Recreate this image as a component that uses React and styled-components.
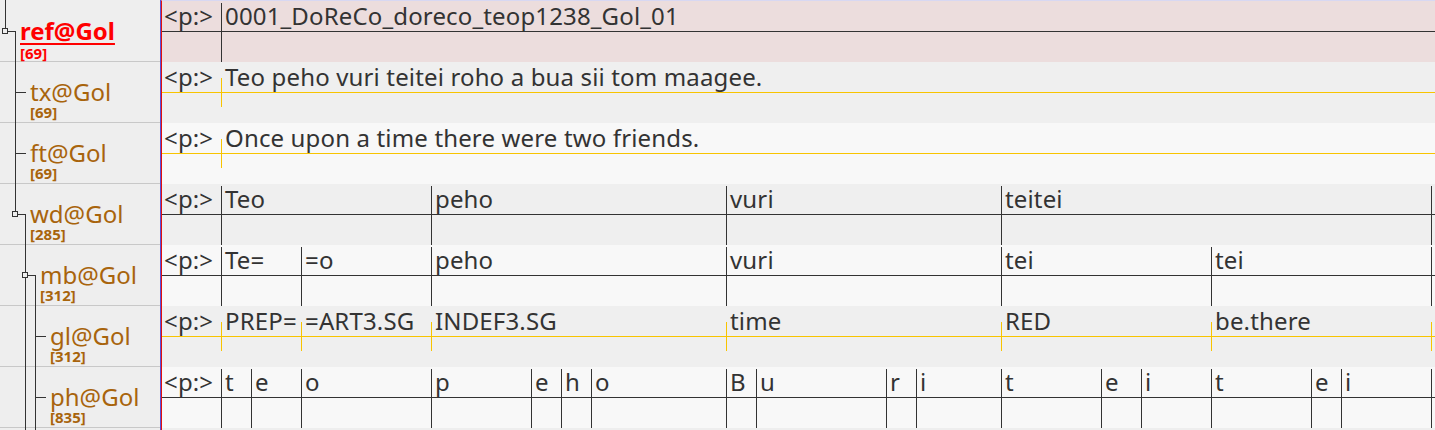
import React from 'react';
import styled, { createGlobalStyle } from 'styled-components';

const GlobalStyle = createGlobalStyle`
  html, body {
    margin: 0;
    padding: 0;
    background: #eeeeee;
    overflow: hidden;
  }
  body {
    font-family: 'Noto Sans', 'Open Sans', sans-serif;
  }
`;

const DARK = '#333333';
const GOLD = '#f8c400';

const tiers = [
  {
    name: 'ref@Gol',
    count: 69,
    depth: 0,
    active: true,
    bg: '#ecdddd',
    line: DARK,
    full: true,
    open: ['0001_DoReCo_doreco_teop1238_Gol_01'],
  },
  {
    name: 'tx@Gol',
    count: 69,
    depth: 1,
    bg: '#efefef',
    line: GOLD,
    open: ['Teo peho vuri teitei roho a bua sii tom maagee.'],
  },
  {
    name: 'ft@Gol',
    count: 69,
    depth: 1,
    bg: '#f8f8f8',
    line: GOLD,
    open: ['Once upon a time there were two friends.'],
  },
  {
    name: 'wd@Gol',
    count: 285,
    depth: 1,
    bg: '#efefef',
    line: DARK,
    full: true,
    bounds: [221, 431, 726, 1001, 1431],
    labels: ['Teo', 'peho', 'vuri', 'teitei'],
  },
  {
    name: 'mb@Gol',
    count: 312,
    depth: 2,
    bg: '#f8f8f8',
    line: DARK,
    full: true,
    bounds: [221, 301, 431, 726, 1001, 1211, 1431],
    labels: ['Te=', '=o', 'peho', 'vuri', 'tei', 'tei'],
  },
  {
    name: 'gl@Gol',
    count: 312,
    depth: 3,
    bg: '#efefef',
    line: GOLD,
    bounds: [221, 301, 431, 726, 1001, 1211, 1431],
    labels: ['PREP=', '=ART3.SG', 'INDEF3.SG', 'time', 'RED', 'be.there'],
  },
  {
    name: 'ph@Gol',
    count: 835,
    depth: 3,
    bg: '#f8f8f8',
    line: DARK,
    full: true,
    bounds: [
      221, 251, 301, 431, 531, 561, 591, 726, 756, 886, 916, 1001, 1101, 1141,
      1211, 1311, 1341, 1431,
    ],
    labels: ['t', 'e', 'o', 'p', 'e', 'h', 'o', 'B', 'u', 'r', 'i', 't', 'e', 'i', 't', 'e', 'i'],
  },
];

const Layout = styled.div`
  display: grid;
  grid-template-columns: 161px 1fr;
  height: 430px;
  overflow: hidden;
`;

const TierPanel = styled.aside`
  position: relative;
  padding-top: 1px;
  background: #eeeeee;
  border-right: 1px solid #5a50d8;
`;

const TierRow = styled.div`
  box-sizing: border-box;
  height: 61px;
  border-bottom: 1px solid #c8c8c8;
  padding: 18px 0 0 ${(p) => 20 + p.$depth * 10}px;
`;

const TierName = styled.div`
  font-size: 24px;
  line-height: 24px;
  white-space: nowrap;
  color: ${(p) => (p.$active ? '#ff0000' : '#a8640c')};
  font-weight: ${(p) => (p.$active ? 700 : 400)};
  text-decoration: ${(p) => (p.$active ? 'underline' : 'none')};
  text-decoration-thickness: 2px;
  text-underline-offset: 3px;
`;

const TierCount = styled.div`
  font-size: 15px;
  line-height: 15px;
  font-weight: 700;
  margin-top: ${(p) => (p.$active ? 3 : 1)}px;
  color: ${(p) => (p.$active ? '#ff0000' : '#a8640c')};
`;

const Tree = styled.svg`
  position: absolute;
  left: 0;
  top: 0;
  pointer-events: none;
`;

const Timeline = styled.main`
  border-left: 1px solid #e01010;
  border-top: 1px solid #d8d8f2;
  overflow: hidden;
  min-width: 0;
`;

const AnnotationRow = styled.div`
  display: flex;
  height: 61px;
  background: linear-gradient(
      to bottom,
      transparent 30px,
      ${(p) => p.$line} 30px,
      ${(p) => p.$line} 31px,
      transparent 31px
    ),
    ${(p) => p.$bg};
`;

const RowLabel = styled.div`
  flex: 0 0 59px;
  padding-left: 2px;
  box-sizing: border-box;
  font-size: 24px;
  line-height: 30px;
  letter-spacing: 0.15px;
  color: ${DARK};
  white-space: nowrap;
`;

const tick = (color, full, side) =>
  full
    ? `linear-gradient(${color}, ${color}) ${side} 2px / 1px calc(100% - 2px) no-repeat`
    : `linear-gradient(${color}, ${color}) ${side} 16px / 1px 29px no-repeat`;

const Segment = styled.div`
  flex: ${(p) => (p.$open ? '1 0 auto' : '0 0 auto')};
  box-sizing: border-box;
  padding-left: 4px;
  font-size: 24px;
  line-height: 30px;
  letter-spacing: 0.15px;
  color: ${DARK};
  white-space: nowrap;
  overflow: visible;
  background: ${(p) =>
    [tick(p.$line, p.$full, 'left'), p.$end ? tick(p.$line, p.$full, 'right') : null]
      .filter(Boolean)
      .join(', ')};
`;

const TreeLines = () => (
  <Tree width="60" height="430" viewBox="0 0 60 430">
    <g stroke={DARK} strokeWidth="1" fill="none" shapeRendering="crispEdges">
      <path d="M5.5 0 V28.5" />
      <path d="M7.5 31.5 H16 M15.5 31.5 V211.5" />
      <path d="M15.5 92.5 H26 M15.5 153.5 H26" />
      <path d="M17.5 214.5 H26 M25.5 214.5 V430" />
      <path d="M27.5 275.5 H36 M35.5 275.5 V430" />
      <path d="M35.5 336.5 H46 M35.5 397.5 H46" />
    </g>
    <g stroke={DARK} strokeWidth="1" fill="#eeeeee" shapeRendering="crispEdges">
      <rect x="2.5" y="28.5" width="5" height="5" />
      <rect x="12.5" y="211.5" width="5" height="5" />
      <rect x="22.5" y="272.5" width="5" height="5" />
    </g>
  </Tree>
);

const Segments = ({ tier }) => {
  if (tier.open) {
    return tier.open.map((text, i) => (
      <Segment key={i} $open $line={tier.line} $full={tier.full}>
        {text}
      </Segment>
    ));
  }
  const { bounds, labels } = tier;
  return labels.map((text, i) => {
    const last = i === labels.length - 1;
    const width = bounds[i + 1] - bounds[i] + (last ? 1 : 0);
    return (
      <Segment
        key={i}
        $line={tier.line}
        $full={tier.full}
        $end={last}
        style={{ width }}
      >
        {text}
      </Segment>
    );
  });
};

const App = () => (
  <>
    <GlobalStyle />
    <Layout>
      <TierPanel>
        <TreeLines />
        {tiers.map((t) => (
          <TierRow key={t.name} $depth={t.depth}>
            <TierName $active={t.active}>{t.name}</TierName>
            <TierCount $active={t.active}>[{t.count}]</TierCount>
          </TierRow>
        ))}
      </TierPanel>
      <Timeline>
        {tiers.map((t) => (
          <AnnotationRow key={t.name} $bg={t.bg} $line={t.line}>
            <RowLabel>&lt;p:&gt;</RowLabel>
            <Segments tier={t} />
          </AnnotationRow>
        ))}
      </Timeline>
    </Layout>
  </>
);

export default App;
